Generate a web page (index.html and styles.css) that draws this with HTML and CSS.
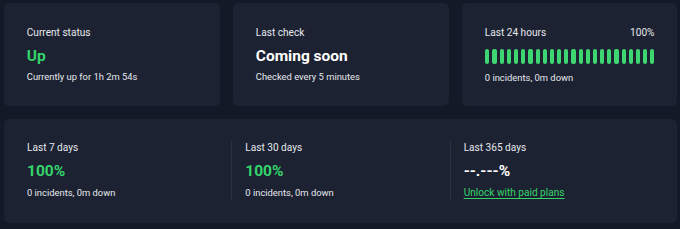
FILE: index.html
```html
<!DOCTYPE html>
<html>
<head>
<meta charset="utf-8">
<link rel="stylesheet" href="styles.css">
</head>
<body>
<div class="page">
  <div class="top-row">
    <div class="card">
      <div class="label">Current status</div>
      <div class="value green">Up</div>
      <div class="sub">Currently up for 1h 2m 54s</div>
    </div>
    <div class="card">
      <div class="label">Last check</div>
      <div class="value">Coming soon</div>
      <div class="sub">Checked every 5 minutes</div>
    </div>
    <div class="card">
      <div class="label-row">
        <span class="label">Last 24 hours</span>
        <span class="label">100%</span>
      </div>
      <div class="bars">
        <span class="bar"></span><span class="bar"></span><span class="bar"></span><span class="bar"></span>
        <span class="bar"></span><span class="bar"></span><span class="bar"></span><span class="bar"></span>
        <span class="bar"></span><span class="bar"></span><span class="bar"></span><span class="bar"></span>
        <span class="bar"></span><span class="bar"></span><span class="bar"></span><span class="bar"></span>
        <span class="bar"></span><span class="bar"></span><span class="bar"></span><span class="bar"></span>
        <span class="bar"></span><span class="bar"></span><span class="bar"></span><span class="bar"></span>
      </div>
      <div class="sub sub-bars">0 incidents, 0m down</div>
    </div>
  </div>
  <div class="card wide">
    <div class="col">
      <div class="label">Last 7 days</div>
      <div class="value green">100%</div>
      <div class="sub">0 incidents, 0m down</div>
    </div>
    <div class="divider"></div>
    <div class="col">
      <div class="label">Last 30 days</div>
      <div class="value green">100%</div>
      <div class="sub">0 incidents, 0m down</div>
    </div>
    <div class="divider"></div>
    <div class="col">
      <div class="label">Last 365 days</div>
      <div class="value">--.---%</div>
      <a class="sub link" href="#">Unlock with paid plans</a>
    </div>
  </div>
</div>
</body>
</html>
```

FILE: styles.css
```css
html, body {
  margin: 0;
  padding: 0;
  background: #131926;
}
body {
  font-family: Roboto, "Noto Sans", Arial, sans-serif;
  color: #e6e8ec;
}
.page {
  width: 673px;
  padding: 3px 0 0 4px;
  display: flex;
  flex-direction: column;
  gap: 13px;
}
.top-row {
  display: grid;
  grid-template-columns: 216px 216px 215px;
  column-gap: 13px;
}
.card {
  background: #1c2232;
  border-radius: 5px;
  padding: 21.5px 22.5px 21px 22.8px;
  height: 103px;
  box-sizing: border-box;
}
.label {
  font-size: 10.1px;
  line-height: 16px;
  color: #e6e8ec;
  display: block;
}
.value {
  margin-top: 4px;
  font-size: 15.5px;
  line-height: 22px;
  font-weight: 700;
  color: #ffffff;
}
.value.green {
  color: #35d46a;
}
.sub {
  margin-top: 2.7px;
  font-size: 9.4px;
  line-height: 16px;
  color: #e6e8ec;
  display: block;
}
.label-row {
  display: flex;
  justify-content: space-between;
}
.bars {
  margin-top: 8px;
  height: 15px;
  display: flex;
  gap: 3px;
  padding-left: 0.5px;
}
.bar {
  flex: 1;
  background: #3ed671;
  border-radius: 2px;
}
.sub-bars {
  margin-top: 6.9px;
}
.wide {
  height: 104px;
  padding: 21px 22px 22px 23px;
  display: grid;
  grid-template-columns: 1fr 1px 1fr 1px 1fr;
  column-gap: 13px;
}
.divider {
  background: #2a3142;
  height: 60px;
  margin-top: 1px;
}
.link {
  font-size: 10.1px;
  color: #35d46a;
  text-decoration: underline;
  text-underline-offset: 1.5px;
}
```
